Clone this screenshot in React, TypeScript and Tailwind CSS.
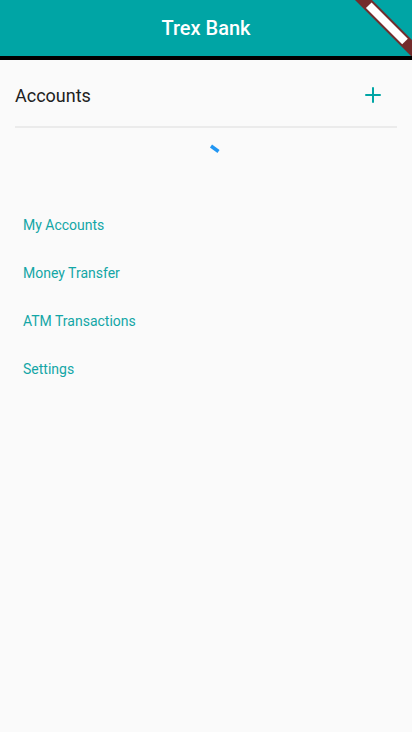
import { Plus } from 'lucide-react'

const menu = ['My Accounts', 'Money Transfer', 'ATM Transactions', 'Settings']

export default function App() {
  return (
    <div className="relative w-[412px] h-[732px] bg-[#fafafa] font-['Roboto',sans-serif] overflow-hidden">
      <div className="h-[60px] bg-[#00a5a5] border-b-4 border-black flex items-center justify-center">
        <span className="text-white text-[20px] font-medium">Trex Bank</span>
      </div>

      {/* banner stripe in corner */}
      <svg className="absolute top-0 right-0" width="60" height="56" viewBox="352 0 60 56">
        <line x1="356.75" y1="-6.75" x2="421.75" y2="58.25" stroke="#732d2d" strokeWidth="12" />
        <line x1="368.75" y1="5.25" x2="405" y2="41.5" stroke="#ffffff" strokeWidth="8" />
      </svg>

      <div className="px-[15px]">
        <div className="h-[66px] pt-1 flex items-center justify-between">
          <span className="text-[18px] text-[#212121]">Accounts</span>
          <Plus className="text-[#00a5a5] mr-[12px]" size={24} strokeWidth={2} />
        </div>
        <div className="h-[2px] bg-[#ebebeb]" />
      </div>

      <div className="h-[73px] pt-4 flex justify-center">
        <svg className="ml-[18px]" width="12" height="10" viewBox="0 0 12 10">
          <line x1="2" y1="2" x2="9.5" y2="7.5" stroke="#2196f3" strokeWidth="3.5" />
        </svg>
      </div>

      <div className="px-[23px]">
        {menu.map((m) => (
          <div key={m} className="h-12 flex items-center text-[14px] text-[#13a6a6]">
            {m}
          </div>
        ))}
      </div>
    </div>
  )
}
